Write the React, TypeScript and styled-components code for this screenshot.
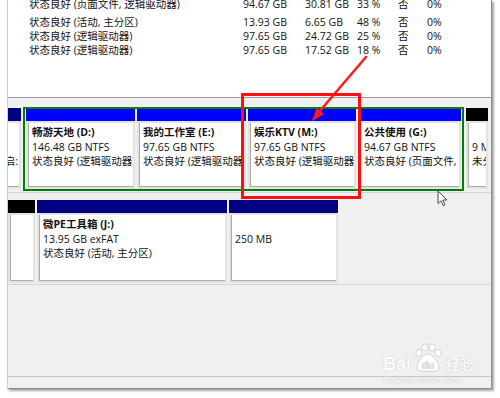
import React from "react";
import styled, { createGlobalStyle } from "styled-components";

const GlobalStyle = createGlobalStyle`
  html, body {
    margin: 0;
    padding: 0;
    background: #fff;
  }
  body {
    font-family: "Open Sans", "Noto Sans CJK SC", sans-serif;
  }
`;

const Page = styled.div`
  position: relative;
  width: 500px;
  height: 398px;
  overflow: hidden;
  background: #fff;
`;

const Window = styled.div`
  margin-left: 7px;
  width: 485px;
  height: 389px;
  box-sizing: border-box;
  border-left: 1px solid #cfcfcf;
  border-right: 1px solid #8a8a8a;
  border-bottom: 1px solid #8a8a8a;
  box-shadow: 2px 2px 2px rgba(0, 0, 0, 0.35);
  background: #f0f0f0;
  display: flex;
  flex-direction: column;
  font-size: 10.5px;
  color: #111;
`;

const TopPane = styled.div`
  height: 97px;
  flex: none;
  background: #fff;
  border-bottom: 1px solid #9a9a9a;
  overflow: hidden;
`;

// first row is scrolled half out of view
const ListTable = styled.div`
  display: grid;
  grid-template-columns: 21px 214px 62px 52px 41px 29px 1fr;
  grid-template-rows: 17.5px 14px 14px 14px;
  align-items: start;
  margin-top: -3px;
  line-height: 14px;
  white-space: nowrap;
`;

const DiskArea = styled.div`
  flex: 1;
  padding-top: 2px;
  display: flex;
  flex-direction: column;
`;

const DiskRow = styled.div<{ $h: number }>`
  display: flex;
  gap: 2px;
  height: ${(p) => p.$h}px;
  padding: 7px 0 1px;
  border-bottom: 1px solid #d6d6d6;
  flex: none;
`;

const Spacer = styled.div`
  flex: 1;
`;

const StatusBar = styled.div`
  height: 11px;
  flex: none;
  border-top: 1px solid #c4c4c4;
`;

const Cell = styled.div<{ $w: number; $outer?: boolean }>`
  width: ${(p) => p.$w}px;
  flex: none;
  display: flex;
  flex-direction: column;
  margin: ${(p) => (p.$outer ? "1px 0 2px" : "0")};
`;

const CellHeader = styled.div<{ $bg: string; $h: number }>`
  height: ${(p) => p.$h}px;
  flex: none;
  background: ${(p) => p.$bg};
`;

const CellBody = styled.div<{ $cut?: boolean }>`
  flex: 1;
  display: flex;
  background: #fff;
  border: 2px solid #e3e3e3;
  border-left-width: ${(p) => (p.$cut ? 0 : 2)}px;
  min-width: 0;
`;

const CellInner = styled.div<{ $cut?: boolean }>`
  flex: 1;
  min-width: 0;
  display: flex;
  flex-direction: column;
  align-items: ${(p) => (p.$cut ? "flex-end" : "flex-start")};
  border-left: ${(p) => (p.$cut ? "none" : "1px solid #a9a9a9")};
  border-bottom: 1px solid #a9a9a9;
  padding: 2px ${(p) => (p.$cut ? 1 : 3)}px 0 ${(p) => (p.$cut ? 0 : 3)}px;
  line-height: 14.5px;
  white-space: nowrap;
  overflow: hidden;
`;

const Line = styled.span<{ $bold?: boolean }>`
  display: block;
  height: 14.5px;
  flex: none;
  font-weight: ${(p) => (p.$bold ? 700 : 400)};
`;

const ExtendedBox = styled.div`
  width: 441px;
  box-sizing: border-box;
  flex: none;
  display: flex;
  gap: 2px;
  padding: 0 1px;
  border: 2px solid #008000;
`;

const Overlay = styled.svg`
  position: absolute;
  left: 0;
  top: 0;
  pointer-events: none;
`;

const Highlight = styled.div`
  position: absolute;
  left: 241px;
  top: 93px;
  width: 120px;
  height: 106px;
  box-sizing: border-box;
  border: 3px solid #ff1010;
  pointer-events: none;
`;

const Watermark = styled.div`
  position: absolute;
  left: 383px;
  top: 343px;
  color: #fff;
  text-shadow: 0 0 1px rgba(0, 0, 0, 0.3);
  display: flex;
  flex-direction: column;
  pointer-events: none;
`;

const MarkTop = styled.div`
  display: flex;
  align-items: flex-end;
  height: 30px;
`;

const MarkLatin = styled.span`
  font-family: "Liberation Sans", sans-serif;
  font-weight: 700;
  font-size: 18px;
  line-height: 18px;
`;

const MarkCjk = styled.span`
  font-family: "Noto Sans CJK SC", sans-serif;
  font-weight: 700;
  font-size: 14px;
  line-height: 18px;
  margin-left: 2px;
`;

const MarkUrl = styled.span`
  font-family: "Liberation Serif", serif;
  font-size: 10px;
  line-height: 12px;
  letter-spacing: 0.2px;
  margin-top: 1px;
`;

type Row = [string, string, string, string, string, string];

const rows: Row[] = [
  ["状态良好 (页面文件, 逻辑驱动器)", "94.67 GB", "30.81 GB", "33 %", "否", "0%"],
  ["状态良好 (活动, 主分区)", "13.93 GB", "6.65 GB", "48 %", "否", "0%"],
  ["状态良好 (逻辑驱动器)", "97.65 GB", "24.72 GB", "25 %", "否", "0%"],
  ["状态良好 (逻辑驱动器)", "97.65 GB", "17.52 GB", "18 %", "否", "0%"],
];

type Part = {
  w: number;
  bg: string;
  hh: number;
  lines: string[];
  outer?: boolean;
  cut?: boolean;
};

const Partition: React.FC<{ part: Part }> = ({ part }) => (
  <Cell $w={part.w} $outer={part.outer}>
    <CellHeader $bg={part.bg} $h={part.hh} />
    <CellBody $cut={part.cut}>
      <CellInner $cut={part.cut}>
        {part.lines.map((t, i) => (
          <Line key={i} $bold={i === 0}>
            {t}
          </Line>
        ))}
      </CellInner>
    </CellBody>
  </Cell>
);

const logical: Part[] = [
  { w: 109, bg: "#0000ff", hh: 12, lines: ["畅游天地  (D:)", "146.48 GB NTFS", "状态良好 (逻辑驱动器)"] },
  { w: 109, bg: "#0000ff", hh: 12, lines: ["我的工作室  (E:)", "97.65 GB NTFS", "状态良好 (逻辑驱动器)"] },
  { w: 108, bg: "#0000ff", hh: 12, lines: ["娱乐KTV  (M:)", "97.65 GB NTFS", "状态良好 (逻辑驱动器)"] },
  { w: 103, bg: "#0000ff", hh: 12, lines: ["公共使用  (G:)", "94.67 GB NTFS", "状态良好 (页面文件, 逻辑驱动器)"] },
];

const disk2: Part[] = [
  { w: 27, bg: "#000000", hh: 13, lines: [] },
  { w: 190, bg: "#000080", hh: 13, lines: ["微PE工具箱  (J:)", "13.95 GB exFAT", "状态良好 (活动, 主分区)"] },
  { w: 109, bg: "#000080", hh: 13, lines: ["", "250 MB"] },
];

const Arrow = () => (
  <Overlay width={500} height={398} viewBox="0 0 500 398">
    <line x1={366} y1={57} x2={319} y2={112} stroke="#ff1a1a" strokeWidth={2.5} strokeLinecap="round" />
    <polygon points="312,121 316.6,107.9 324.2,114.3" fill="#ff1a1a" />
  </Overlay>
);

const Pointer = () => (
  <Overlay width={500} height={398} viewBox="0 0 500 398">
    <path
      d="M438 191 L438 203.5 L441 200.8 L443.2 205.6 L445 204.8 L442.8 200 L447 200 Z"
      fill="#fff"
      stroke="#333"
      strokeWidth={0.9}
      strokeLinejoin="round"
    />
  </Overlay>
);

const PawLogo = () => (
  <svg width={30} height={30} viewBox="0 0 30 30" style={{ margin: "0 1px 0 2px" }}>
    <g fill="#fff" stroke="rgba(0,0,0,0.18)" strokeWidth={0.8}>
      <ellipse cx={6} cy={10} rx={3} ry={3.6} />
      <ellipse cx={12} cy={4.5} rx={3} ry={3.6} />
      <ellipse cx={19} cy={4.5} rx={3} ry={3.6} />
      <ellipse cx={25} cy={10} rx={3} ry={3.6} />
      <path d="M15 11 C10 11 4 20 4 24 C4 28 9 29 15 28 C21 29 26 28 26 24 C26 20 20 11 15 11 Z" />
    </g>
    <text x={15} y={26} textAnchor="middle" fontFamily="Liberation Sans, sans-serif" fontWeight={700} fontSize={10} fill="#e4e4e4">
      du
    </text>
  </svg>
);

const App: React.FC = () => {
  return (
    <Page>
      <GlobalStyle />
      <Window>
        <TopPane>
          <ListTable>
            {rows.map((r, i) => (
              <React.Fragment key={i}>
                <span />
                {r.map((c, j) => (
                  <span key={j}>{c}</span>
                ))}
              </React.Fragment>
            ))}
          </ListTable>
        </TopPane>
        <DiskArea>
          <DiskRow $h={84}>
            <Partition part={{ w: 13, bg: "#000080", hh: 13, lines: ["", "", "启:"], outer: true, cut: true }} />
            <ExtendedBox>
              {logical.map((p, i) => (
                <Partition key={i} part={p} />
              ))}
            </ExtendedBox>
            <Partition part={{ w: 22, bg: "#000000", hh: 13, lines: ["", "9 MB", "未分配"], outer: true }} />
          </DiskRow>
          <DiskRow $h={83}>
            {disk2.map((p, i) => (
              <Partition key={i} part={p} />
            ))}
          </DiskRow>
          <Spacer />
        </DiskArea>
        <StatusBar />
      </Window>
      <Highlight />
      <Arrow />
      <Pointer />
      <Watermark>
        <MarkTop>
          <MarkLatin>Bai</MarkLatin>
          <PawLogo />
          <MarkCjk>经验</MarkCjk>
        </MarkTop>
        <MarkUrl>jingyan.baidu.com</MarkUrl>
      </Watermark>
    </Page>
  );
};

export default App;
